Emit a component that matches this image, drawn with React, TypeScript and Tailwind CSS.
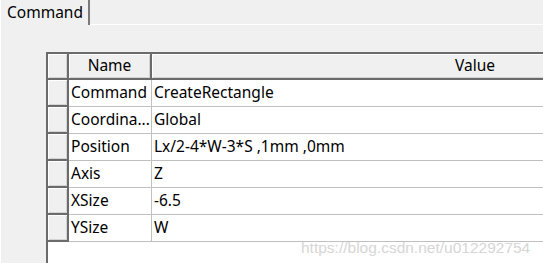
const rows = [
  { name: "Command", value: "CreateRectangle" },
  { name: "Coordina...", value: "Global" },
  { name: "Position", value: "Lx/2-4*W-3*S ,1mm ,0mm" },
  { name: "Axis", value: "Z" },
  { name: "XSize", value: "-6.5" },
  { name: "YSize", value: "W" },
];

// raised look of the header / gutter cells
const raised =
  "bg-[#f0f0f0] shadow-[inset_1px_1px_0_#ffffff,inset_-1px_-1px_0_#d4d4d4]";

export default function App() {
  return (
    <div
      className="relative w-[543px] h-[263px] overflow-hidden bg-[#f0f0f0] border-l border-white text-[15.5px] text-black"
      style={{ fontFamily: '"Noto Sans", "Open Sans", sans-serif' }}
    >
      {/* tab strip */}
      <div className="flex h-[25px]">
        <div className="w-[89px] pl-[6px] leading-[24px] border-r-2 border-[#7a7a7a]">
          Command
        </div>
        <div className="flex-1 border-b border-white" />
      </div>

      {/* property grid */}
      <div className="ml-[45px] mt-[27px] w-[760px] h-[300px] bg-white border-l-2 border-t-2 border-[#6b6b6b]">
        <div className="flex h-[26px] border-b-2 border-[#6b6b6b]">
          <div className={`w-[21px] border-r-2 border-[#6b6b6b] ${raised}`} />
          <div
            className={`w-[83px] border-r-2 border-[#6b6b6b] flex items-center justify-center ${raised}`}
          >
            Name
          </div>
          <div className={`w-[646px] flex items-center justify-center ${raised}`}>
            Value
          </div>
        </div>

        {rows.map((r) => (
          <div key={r.name} className="flex h-[27px]">
            <div
              className={`w-[21px] border-r-2 border-b-2 border-[#6b6b6b] ${raised}`}
            />
            <div className="w-[83px] flex items-center pl-[2px] border-r border-b border-[#c0c0c0] whitespace-nowrap overflow-hidden">
              {r.name}
            </div>
            <div className="w-[646px] flex items-center pl-[2px] border-b border-[#c0c0c0] whitespace-nowrap">
              {r.value}
            </div>
          </div>
        ))}
      </div>

      {/* watermark */}
      <div
        className="absolute left-[300px] top-[236px] text-[15.5px] text-[#d6d6d6]"
        style={{ fontFamily: '"Liberation Sans", Arial, sans-serif' }}
      >
        https://blog.csdn.net/u012292754
      </div>
    </div>
  );
}
